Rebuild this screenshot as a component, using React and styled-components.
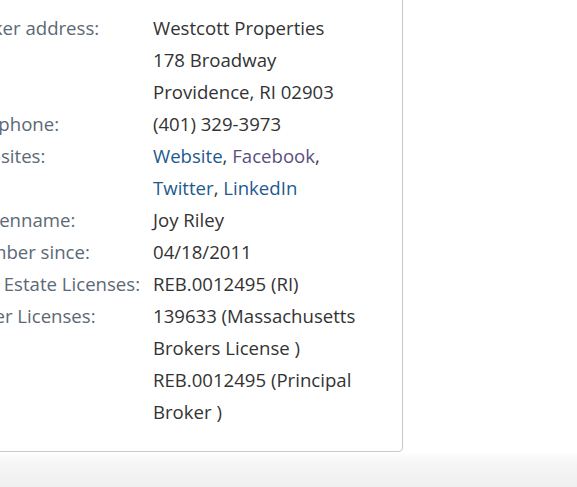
import React from 'react';
import styled, { createGlobalStyle } from 'styled-components';

const GlobalStyle = createGlobalStyle`
  html, body {
    margin: 0;
    padding: 0;
    background: #fff;
    overflow: hidden;
  }
  body {
    font-family: "Open Sans", "Liberation Sans", sans-serif;
  }
`;

const Page = styled.div`
  width: 577px;
  height: 487px;
  display: flex;
  flex-direction: column;
  background: #fff;
`;

const Card = styled.section`
  margin: -9px 0 0 -59px;
  width: 462px;
  box-sizing: border-box;
  padding: 20px 34px 23px 20px;
  border: 1px solid #c9c9c9;
  border-radius: 4px;
  background: #fff;
`;

const Details = styled.dl`
  margin: 0;
  display: grid;
  grid-template-columns: 191px 215px;
  font-size: 18.6px;
  line-height: 32px;
`;

const Label = styled.dt`
  margin: 0;
  color: #5b6876;
  white-space: nowrap;
`;

const Value = styled.dd`
  margin: 0;
  color: #333;
`;

const Line = styled.span`
  display: block;
`;

const Link = styled.a`
  color: ${({ $visited }) => ($visited ? '#5a4f80' : '#1d5a8e')};
  text-decoration: none;
`;

const Footer = styled.div`
  flex: 1;
  margin-top: 1px;
  background: linear-gradient(to bottom, #fdfdfd 0%, #f4f4f4 40%, #f0f0f0 100%);
`;

export default function App() {
  return (
    <Page>
      <GlobalStyle />
      <Card>
        <Details>
          <Label>Broker address:</Label>
          <Value>
            <Line>Westcott Properties</Line>
            <Line>178 Broadway</Line>
            <Line>Providence, RI 02903</Line>
          </Value>
          <Label>Cell phone:</Label>
          <Value>(401) 329-3973</Value>
          <Label>Websites:</Label>
          <Value>
            <Link href="#">Website</Link>, <Link href="#" $visited>Facebook</Link>,{' '}
            <Link href="#">Twitter</Link>, <Link href="#">LinkedIn</Link>
          </Value>
          <Label>Screenname:</Label>
          <Value>Joy Riley</Value>
          <Label>Member since:</Label>
          <Value>04/18/2011</Value>
          <Label>Real Estate Licenses:</Label>
          <Value>REB.0012495 (RI)</Value>
          <Label>Other Licenses:</Label>
          <Value>
            <Line>139633 (Massachusetts Brokers License )</Line>
            <Line>REB.0012495 (Principal Broker )</Line>
          </Value>
        </Details>
      </Card>
      <Footer />
    </Page>
  );
}
